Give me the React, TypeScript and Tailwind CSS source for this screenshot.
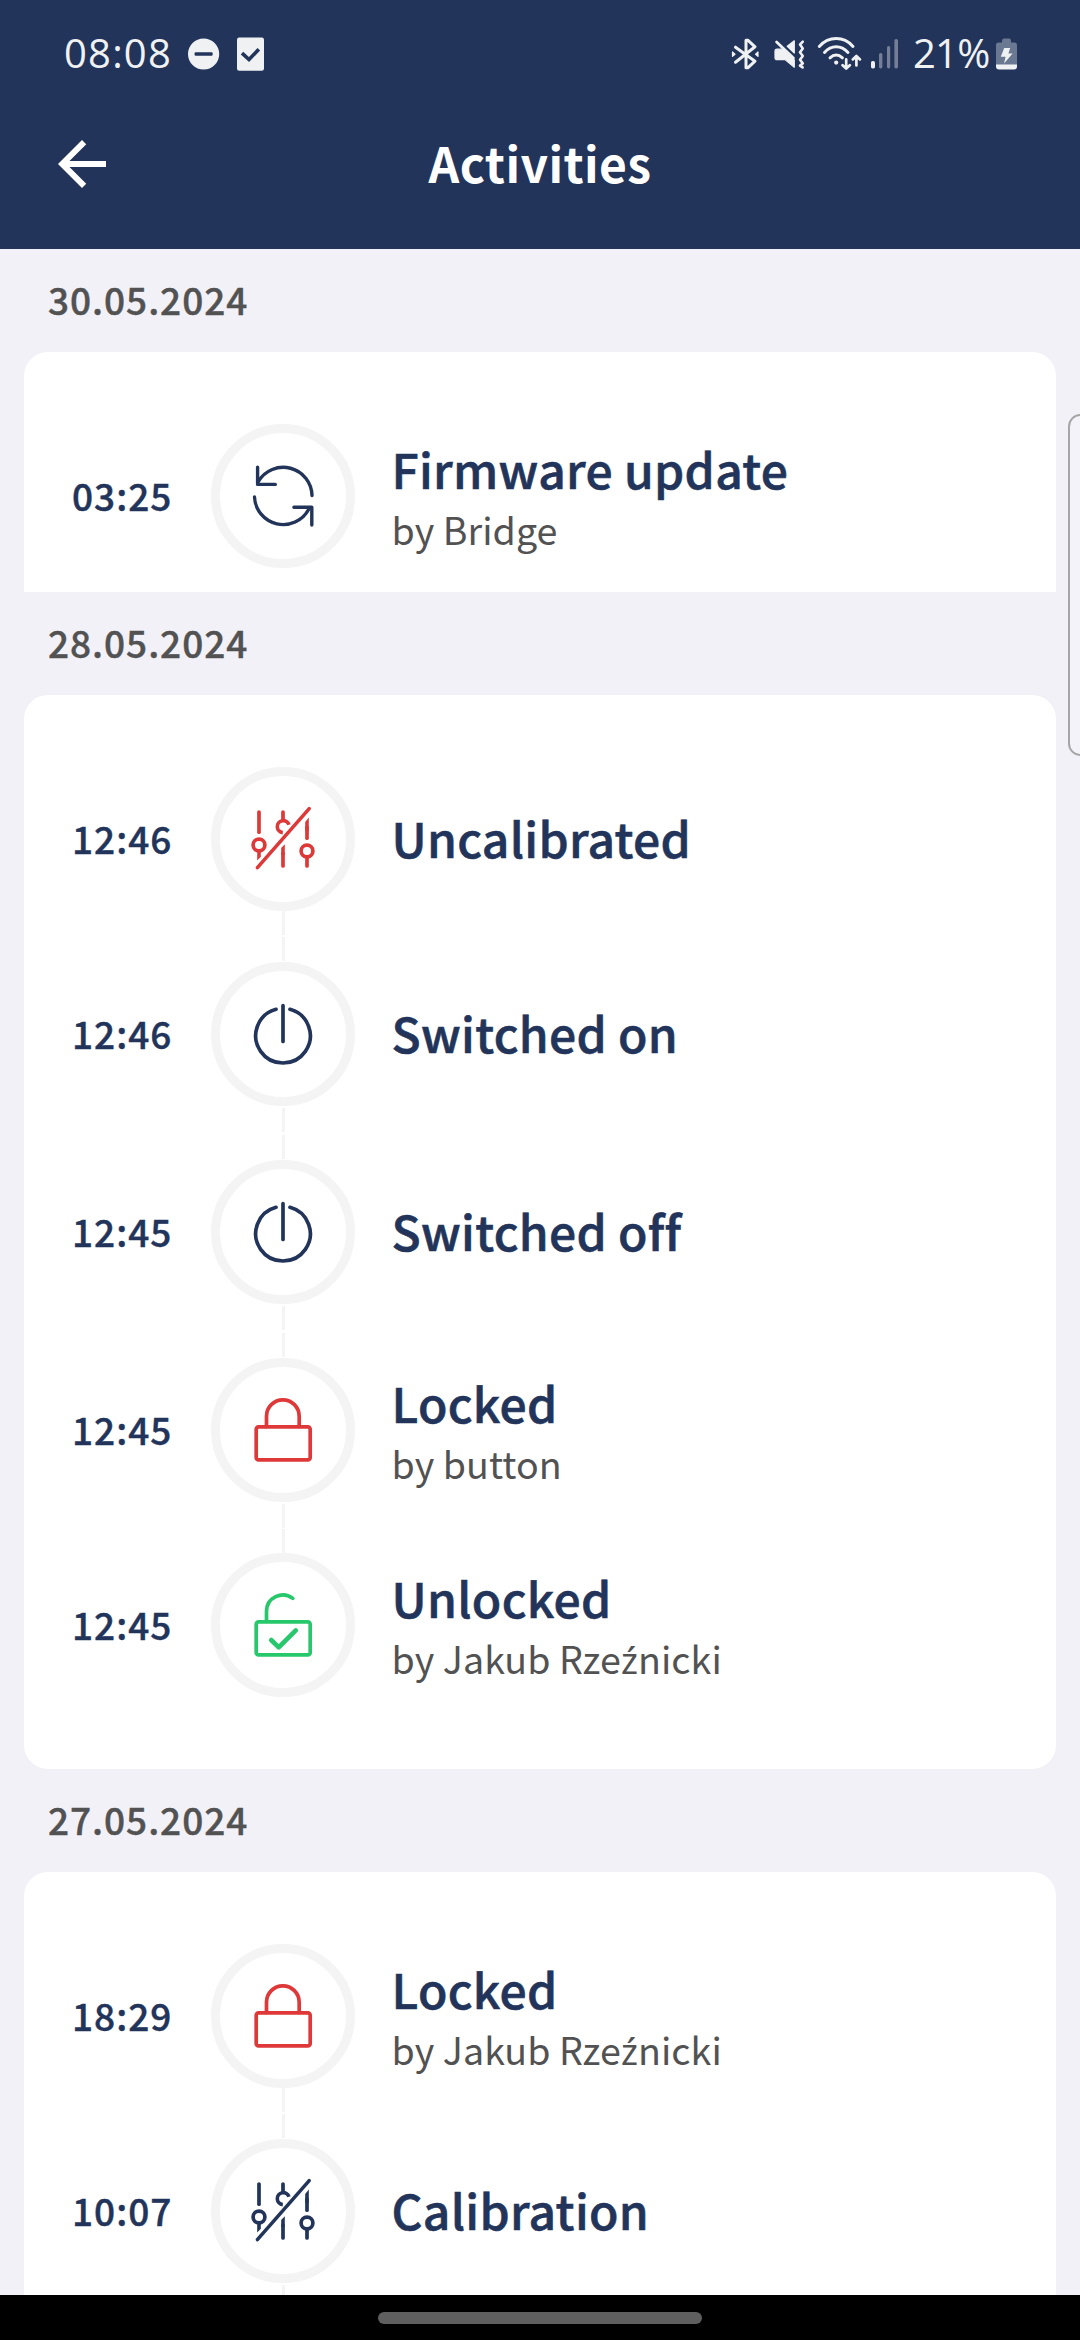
import React from "react";

type IconName = "update" | "calibration" | "power" | "locked" | "unlocked";

interface Activity {
  time: string;
  icon: IconName;
  color: string;
  title: string;
  by?: React.ReactNode;
  // Classes for the three gaps around the two connector segments below the row
  link?: [string, string, string];
}

const NAVY = "text-[#22345a]";
const RED = "text-[#de3838]";
const GREEN = "text-[#27c86b]";

const jakub = (
  <>
    by Jakub Rze<span className="font-['Noto_Sans','Open_Sans',sans-serif] text-[36px] leading-none">ź</span>nicki
  </>
);

const may30: Activity[] = [
  { time: "03:25", icon: "update", color: NAVY, title: "Firmware update", by: "by Bridge" },
];

const may28: Activity[] = [
  { time: "12:46", icon: "calibration", color: RED, title: "Uncalibrated", link: ["h-0", "h-[2px]", "h-[1px]"] },
  { time: "12:46", icon: "power", color: NAVY, title: "Switched on", link: ["h-[2px]", "h-[3px]", "h-[1px]"] },
  { time: "12:45", icon: "power", color: NAVY, title: "Switched off", link: ["h-[2px]", "h-[3px]", "h-[1px]"] },
  { time: "12:45", icon: "locked", color: RED, title: "Locked", by: "by button", link: ["h-[2px]", "h-[1px]", "h-0"] },
  { time: "12:45", icon: "unlocked", color: GREEN, title: "Unlocked", by: jakub },
];

const may27: Activity[] = [
  { time: "18:29", icon: "locked", color: RED, title: "Locked", by: jakub, link: ["h-0", "h-[2px]", "h-[1px]"] },
  { time: "10:07", icon: "calibration", color: NAVY, title: "Calibration", link: ["h-[2px]", "h-[3px]", "h-[1px]"] },
];

function ActivityIcon({ name }: { name: IconName }) {
  return (
    <svg
      viewBox="9 9 126 126"
      className="h-[126px] w-[126px]"
      fill="none"
      stroke="currentColor"
      strokeWidth="3.7"
      strokeLinecap="round"
      strokeLinejoin="round"
    >
      {name === "update" && (
        <g strokeWidth="3.4">
          <path d="M101 71.5A28.8 28.8 0 0 0 47.4 57.5" />
          <path d="M46.6 43.2V60.4H64.3" />
          <path d="M43.5 73A28.8 28.8 0 0 0 97.6 85.5" />
          <path d="M82.9 83.3H100.8V101" />
        </g>
      )}
      {name === "power" && (
        <>
          <path d="M65 47.3A27.3 27.3 0 1 0 79 47.3" />
          <path d="M72 43.7V79.5" />
        </>
      )}
      {(name === "locked" || name === "unlocked") && (
        <rect x="45.2" y="68.8" width="54" height="33" rx="2.4" />
      )}
      {name === "locked" && <path d="M55.5 68.5V58.2A16.35 16.35 0 0 1 88.2 58.2V68.5" />}
      {name === "unlocked" && (
        <>
          <path d="M55.5 68.5V58.2A16.35 16.35 0 0 1 81.8 45.4" />
          <path d="M60.2 87L67.7 94.4L84.8 77.4" strokeWidth="4.6" />
        </>
      )}
      {name === "calibration" && (
        <>
          <path d="M48 45V65.2" />
          <path d="M72 45V53" />
          <path d="M72 86V99" />
          <path d="M96 60V71.2" />
          <path d="M96 91V99" />
          <g fill="currentColor" stroke="none">
            <path d="M46.2 84H49.8V89.8L46.2 93.6Z" />
            <path d="M70.2 81L73.8 77.2V88H70.2Z" />
            <path d="M94.2 55L97.8 50.6V64H94.2Z" />
          </g>
          <circle cx="48" cy="78" r="5.9" />
          <circle cx="96" cy="84" r="5.9" />
          <path d="M78 57.8A6 6 0 1 0 71.8 65.6" strokeWidth="3.6" strokeLinecap="butt" />
          <path d="M98.2 41.6L46.4 100.6" strokeWidth="3.5" />
        </>
      )}
    </svg>
  );
}

function Row({ a }: { a: Activity }) {
  return (
    <div>
      <div className="flex h-[144px] items-center">
        <div className="w-[139px] pb-[2px] text-[37px] leading-[48px] font-medium tracking-[1px] text-[#22345a] [-webkit-text-stroke:0.4px_currentColor]">
          {a.time}
        </div>
        <div className={`flex h-[144px] w-[144px] shrink-0 items-center justify-center rounded-full border-9 border-[#f4f4f4] ${a.color}`}>
          <ActivityIcon name={a.icon} />
        </div>
        <div className={a.by ? "pt-[5px] pl-[36.5px]" : "pb-[5px] pl-[36.5px]"}>
          <div className="text-[48px] leading-[60px] font-medium tracking-[0.3px] text-[#22345a] [-webkit-text-stroke:0.6px_currentColor]">
            {a.title}
          </div>
          {a.by && <div className="pt-px text-[37.6px] leading-[60px] font-normal tracking-[0.06px] whitespace-nowrap text-[#525252]">{a.by}</div>}
        </div>
      </div>
      {a.link && (
        <div className="ml-[210px] flex flex-col">
          <div className={a.link[0]} />
          <div className="h-6 w-[3px] bg-[#f4f4f4]" />
          <div className={a.link[1]} />
          <div className="h-6 w-[3px] bg-[#f4f4f4]" />
          <div className={a.link[2]} />
        </div>
      )}
    </div>
  );
}

function Section({ date, items, className }: { date: string; items: Activity[]; className: string }) {
  return (
    <section>
      <h2 className="flex h-[103px] items-center pb-[3px] pl-12 text-[37px] leading-[48px] font-medium tracking-[0.95px] text-[#525252] [-webkit-text-stroke:0.4px_currentColor]">
        {date}
      </h2>
      <div className={`mx-6 bg-white pt-[72px] pl-12 ${className}`}>
        {items.map((a, i) => (
          <Row key={i} a={a} />
        ))}
      </div>
    </section>
  );
}

function StatusBar() {
  return (
    <div className="flex h-[107px] items-center text-[#eff1f3]">
      <span className="ml-[64px] w-[124px] pb-px font-['Open_Sans',sans-serif] text-[40px] leading-[48px] font-normal tracking-[1.2px]">
        08:08
      </span>
      <svg viewBox="0 0 32 34" className="h-[34px] w-8">
        <circle cx="15.6" cy="17" r="15.6" fill="currentColor" />
        <rect x="6.6" y="15.3" width="18" height="3.4" rx="1" fill="#22345a" />
      </svg>
      <svg viewBox="0 0 27 34" className="ml-[17px] h-[34px] w-[27px]">
        <rect y="0.5" width="27" height="33.3" rx="2.2" fill="currentColor" />
        <path d="M5 16.2L12 22.6L21.8 12.3" fill="none" stroke="#22345a" strokeWidth="3.6" />
      </svg>

      <svg viewBox="10 7 28 32" className="ml-[467px] h-8 w-7" fill="none" stroke="currentColor" strokeWidth="3" strokeLinejoin="round" strokeLinecap="round">
        <path d="M14.5 31.2L34 15.8L26.8 9.2H25V36.8H26.8L34 30.2L14.5 16.2" />
        <path d="M11.5 21V25.4L14 23.2ZM37 21V25.4L34.6 23.2Z" fill="currentColor" strokeWidth="1.2" />
      </svg>
      <svg viewBox="53 7 31 32" className="ml-[15px] h-8 w-[31px]" fill="none" stroke="currentColor" strokeLinecap="round" strokeLinejoin="round">
        <path d="M56 18.2H62.5L73.3 29V36.2L64 28.6H56Q54 28.6 54 26.4V20.4Q54 18.2 56 18.2Z" fill="currentColor" strokeWidth="1.2" />
        <path d="M55.6 11L72.4 27" strokeWidth="2.8" />
        <path d="M66.2 15.2L73.3 9.8V22Z" fill="currentColor" strokeWidth="1.2" />
        <path d="M81.8 10.6L79 13.6L81.8 17.4L79 21.2L81.8 25L79 28.8L81.8 32.4L79 34.6L81.6 36.4" strokeWidth="2.6" />
      </svg>
      <svg viewBox="96 5 46 34" className="mb-[2px] ml-3 h-[34px] w-[46px]" fill="none" stroke="currentColor" strokeWidth="3" strokeLinecap="round" strokeLinejoin="round">
        <path d="M98.3 15.4Q105.5 7.6 115.2 7.6T132 15.4" />
        <path d="M103.5 21.4Q108.6 15.8 115.2 15.8T127 21.4" />
        <path d="M109 26.8Q112 24 115.2 24T121.4 26.8" />
        <circle cx="115.2" cy="31.6" r="2.1" fill="currentColor" stroke="none" />
        <path d="M125.2 28.4V37.2M121.6 34.2L125.2 37.6L128.8 34.2" strokeWidth="2.7" />
        <path d="M135.4 34.4V25.4M131.8 28.4L135.4 25L139 28.4" strokeWidth="2.7" />
      </svg>
      <svg viewBox="870 38 28 30" className="ml-[8px] h-[30px] w-7" fill="currentColor">
        <rect x="870" y="60" width="4" height="7.4" rx="1.6" />
        <rect x="878" y="52" width="3.4" height="15.4" rx="1.6" opacity=".4" />
        <rect x="886" y="45" width="3.2" height="22.4" rx="1.6" opacity=".4" />
        <rect x="893.4" y="38" width="3.6" height="29.4" rx="1.6" opacity=".4" />
      </svg>
      <span className="ml-[14px] w-[83px] pb-px font-['Open_Sans',sans-serif] text-[40px] leading-[48px] font-normal tracking-[-0.8px]">
        21%
      </span>
      <svg viewBox="0 0 21 32" className="h-8 w-[21px]" fill="currentColor">
        <path d="M6 3Q6 .6 8 .6H13Q15 .6 15 3V4.4H18.4Q21 4.4 21 7.2V27H0V7.2Q0 4.4 2.6 4.4H6Z" opacity=".36" />
        <path d="M0 26.6H21V28.6Q21 31.6 18 31.6H3Q0 31.6 0 28.6Z" />
        <path d="M8.2 10H14.2L12.4 15.4H16.6L8 25.6L9.6 18.8H4.8Z" />
      </svg>
    </div>
  );
}

export default function App() {
  return (
    <div className="relative flex h-[2340px] w-[1080px] flex-col overflow-hidden bg-[#f2f1f8] font-['Noto_Sans_CJK_SC','Noto_Sans',sans-serif]">
      <header className="h-[249px] shrink-0 bg-[#22345a]">
        <StatusBar />
        <div className="flex h-[114px] items-center pl-[46px] text-white">
          <svg viewBox="0 0 24 24" className="h-[72px] w-[72px]" fill="currentColor">
            <path d="M20 11H7.83l5.59-5.59L12 4l-8 8 8 8 1.41-1.41L7.83 13H20v-2z" />
          </svg>
          <h1 className="flex-1 pr-[118px] pb-1 text-center text-[48px] leading-[60px] font-bold tracking-[0.4px]">Activities</h1>
        </div>
      </header>

      <main className="min-h-0 flex-1 overflow-hidden">
        <Section date="30.05.2024" items={may30} className="rounded-t-3xl pb-6" />
        <Section date="28.05.2024" items={may28} className="rounded-3xl pb-[72px]" />
        <Section date="27.05.2024" items={may27} className="rounded-t-3xl" />
      </main>

      <nav className="flex h-[45px] shrink-0 justify-center bg-black pt-[17px]">
        <div className="h-3 w-[324px] rounded-full bg-[#5f5f5f]" />
      </nav>

      <div className="absolute top-[414px] -right-[13px] h-[342px] w-[25px] rounded-[14px] border-2 border-[#a6a6a6] bg-[#f4f3f9]" />
    </div>
  );
}
